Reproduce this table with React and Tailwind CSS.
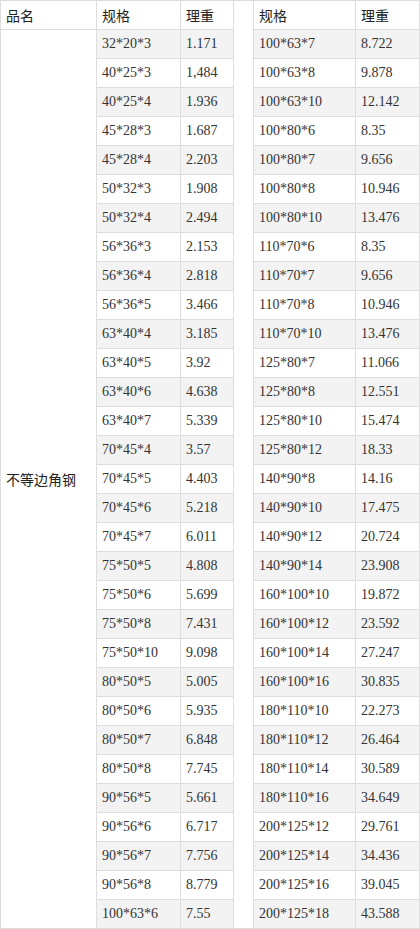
import React from "react";

const left = [
  ["32*20*3", "1.171"],
  ["40*25*3", "1,484"],
  ["40*25*4", "1.936"],
  ["45*28*3", "1.687"],
  ["45*28*4", "2.203"],
  ["50*32*3", "1.908"],
  ["50*32*4", "2.494"],
  ["56*36*3", "2.153"],
  ["56*36*4", "2.818"],
  ["56*36*5", "3.466"],
  ["63*40*4", "3.185"],
  ["63*40*5", "3.92"],
  ["63*40*6", "4.638"],
  ["63*40*7", "5.339"],
  ["70*45*4", "3.57"],
  ["70*45*5", "4.403"],
  ["70*45*6", "5.218"],
  ["70*45*7", "6.011"],
  ["75*50*5", "4.808"],
  ["75*50*6", "5.699"],
  ["75*50*8", "7.431"],
  ["75*50*10", "9.098"],
  ["80*50*5", "5.005"],
  ["80*50*6", "5.935"],
  ["80*50*7", "6.848"],
  ["80*50*8", "7.745"],
  ["90*56*5", "5.661"],
  ["90*56*6", "6.717"],
  ["90*56*7", "7.756"],
  ["90*56*8", "8.779"],
  ["100*63*6", "7.55"],
];

const right = [
  ["100*63*7", "8.722"],
  ["100*63*8", "9.878"],
  ["100*63*10", "12.142"],
  ["100*80*6", "8.35"],
  ["100*80*7", "9.656"],
  ["100*80*8", "10.946"],
  ["100*80*10", "13.476"],
  ["110*70*6", "8.35"],
  ["110*70*7", "9.656"],
  ["110*70*8", "10.946"],
  ["110*70*10", "13.476"],
  ["125*80*7", "11.066"],
  ["125*80*8", "12.551"],
  ["125*80*10", "15.474"],
  ["125*80*12", "18.33"],
  ["140*90*8", "14.16"],
  ["140*90*10", "17.475"],
  ["140*90*12", "20.724"],
  ["140*90*14", "23.908"],
  ["160*100*10", "19.872"],
  ["160*100*12", "23.592"],
  ["160*100*14", "27.247"],
  ["160*100*16", "30.835"],
  ["180*110*10", "22.273"],
  ["180*110*12", "26.464"],
  ["180*110*14", "30.589"],
  ["180*110*16", "34.649"],
  ["200*125*12", "29.761"],
  ["200*125*14", "34.436"],
  ["200*125*16", "39.045"],
  ["200*125*18", "43.588"],
];

function HeadCell({ children }) {
  return (
    <div className="flex items-center px-[5px] border-r border-b border-[#dddddd] bg-white text-[14px] leading-none whitespace-nowrap text-[#222222] font-[family-name:Noto_Sans_CJK_SC,sans-serif]">
      {children}
    </div>
  );
}

function Cell({ children, shaded }) {
  return (
    <div
      className={
        shaded
          ? "flex items-center px-[5px] border-r border-b border-[#dddddd] bg-[#f3f3f3] text-[14px] leading-none whitespace-nowrap text-[#333333] font-[family-name:Liberation_Serif,serif]"
          : "flex items-center px-[5px] border-r border-b border-[#dddddd] bg-white text-[14px] leading-none whitespace-nowrap text-[#333333] font-[family-name:Liberation_Serif,serif]"
      }
    >
      {children}
    </div>
  );
}

export default function App() {
  return (
    <div className="w-[420px] bg-white">
      <div className="grid grid-cols-[96px_84px_53px_20px_102px_64px] grid-rows-[repeat(32,29px)] border-t border-l border-[#dddddd]">
        <HeadCell>品名</HeadCell>
        <HeadCell>规格</HeadCell>
        <HeadCell>理重</HeadCell>
        <div className="row-span-32 border-r border-b border-[#dddddd] bg-white" />
        <HeadCell>规格</HeadCell>
        <HeadCell>理重</HeadCell>
        <div className="row-span-31 flex items-center px-[5px] border-r border-b border-[#dddddd] bg-white text-[14px] text-[#222222] font-[family-name:Noto_Sans_CJK_SC,sans-serif]">
          不等边角钢
        </div>
        {left.map((l, i) => {
          const r = right[i];
          const shaded = i % 2 === 0;
          return (
            <React.Fragment key={i}>
              <Cell shaded={shaded}>{l[0]}</Cell>
              <Cell shaded={shaded}>{l[1]}</Cell>
              <Cell shaded={shaded}>{r[0]}</Cell>
              <Cell shaded={shaded}>{r[1]}</Cell>
            </React.Fragment>
          );
        })}
      </div>
    </div>
  );
}
